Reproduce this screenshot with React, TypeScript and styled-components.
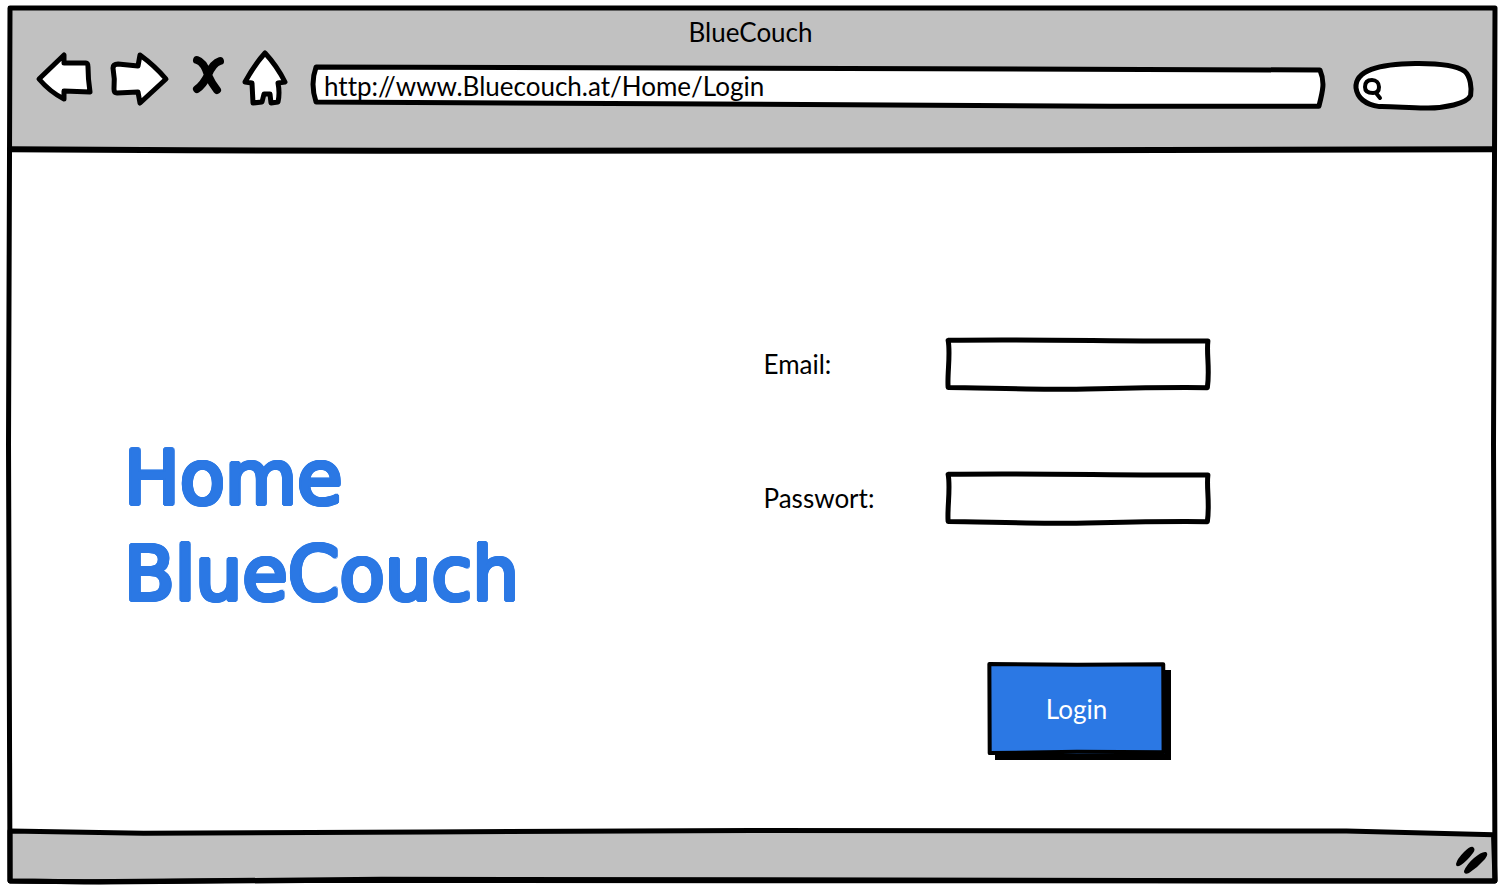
import React from "react";
import styled, { createGlobalStyle } from "styled-components";

const ink = "#000";
const chrome = "#c1c1c1";
const blue = "#2b78e4";
const sans = `Lato, "Open Sans", sans-serif`;

/* Soft marker edge: the glyphs are thickened by 2px in every direction. */
const markerEdge = [
  [2, 0], [-2, 0], [0, 2], [0, -2],
  [2, 1], [2, -1], [-2, 1], [-2, -1],
  [1, 2], [1, -2], [-1, 2], [-1, -2],
]
  .map(([x, y]) => `${x}px ${y}px 0 ${blue}`)
  .join(", ");

const GlobalStyle = createGlobalStyle`
  * { box-sizing: border-box; }
  body {
    margin: 0;
    background: #fff;
    color: ${ink};
    font: 26px/32px ${sans};
    font-variant-ligatures: none;
  }
  input, button { font: inherit; font-variant-ligatures: none; }
`;

const Page = styled.div`
  min-height: 100vh;
  padding: 8px 10px;
  display: flex;
`;

const Browser = styled.div`
  position: relative;
  flex: 1;
  display: flex;
  flex-direction: column;
`;

const Outline = styled.svg`
  position: absolute;
  inset: 0;
  width: 100%;
  height: 100%;
  overflow: visible;
  pointer-events: none;

  path {
    vector-effect: non-scaling-stroke;
    stroke: ${ink};
    stroke-linejoin: round;
    stroke-linecap: round;
  }
`;

type SketchProps = { d: string; fill?: string; width?: number };

/** Hand-drawn edge, stretched to the box that holds it. */
const Sketch = ({ d, fill = "none", width = 5 }: SketchProps) => (
  <Outline viewBox="0 0 1000 1000" preserveAspectRatio="none" aria-hidden="true">
    <path d={d} fill={fill} strokeWidth={width} />
  </Outline>
);

const Header = styled.header`
  position: relative;
  height: 142px;
  background: ${chrome};
`;

const Title = styled.div`
  padding: 8px 4px 0 0;
  text-align: center;
`;

const Toolbar = styled.div`
  display: flex;
  align-items: center;
  height: 62px;
  padding: 0 22px 0 26px;
`;

const Nav = styled.nav`
  display: flex;
  align-items: center;
  gap: 18px;
  height: 56px;
  margin-right: 26px;
`;

const IconButton = styled.button<{ $width: number }>`
  width: ${(p) => p.$width}px;
  height: 56px;
  padding: 0;
  border: 0;
  background: none;
  cursor: pointer;

  svg {
    display: block;
    overflow: visible;
  }
`;

const Field = styled.div`
  position: relative;
  display: flex;
`;

const AddressField = styled(Field)`
  flex: 1;
  height: 42px;
  margin: 14px 30px 0 0;
`;

const SearchField = styled(Field)`
  width: 120px;
  height: 48px;
  margin-top: 12px;
`;

const TextInput = styled.input<{ $inset?: number }>`
  position: relative;
  width: 100%;
  min-width: 0;
  padding: 0 12px 0 ${(p) => p.$inset ?? 12}px;
  border: 0;
  outline: 0;
  background: transparent;
  color: ${ink};
`;

const SearchIcon = styled.svg`
  position: absolute;
  left: 8px;
  top: 16px;
`;

const Main = styled.main`
  flex: 1;
  display: grid;
  grid-template-columns: 1fr 1fr;
  background: #fff;
`;

const Heading = styled.h1`
  margin: 0;
  padding: 280px 0 0 114px;
  color: ${blue};
  font-family: "DejaVu Sans", sans-serif;
  font-size: 74px;
  line-height: 96px;
  font-weight: 400;
  text-shadow: ${markerEdge};
`;

const Form = styled.form`
  padding: 188px 0 66px 11px;
`;

const FormRow = styled.div`
  display: grid;
  grid-template-columns: 182px 264px;
  align-items: center;
  height: 52px;
  margin-bottom: 82px;
`;

const FormField = styled(Field)`
  height: 52px;
`;

const LoginButton = styled.button`
  position: relative;
  display: block;
  width: 176px;
  height: 90px;
  margin: 140px 0 0 225px;
  padding: 0;
  border: 0;
  background: ${blue};
  box-shadow: 6px 6px 0 ${ink};
  color: #fff;
  cursor: pointer;
`;

const Footer = styled.footer`
  position: relative;
  height: 50px;
  display: flex;
  align-items: center;
  justify-content: flex-end;
  padding: 8px 6px 0 0;
`;

const Grip = styled.svg`
  position: relative;
`;

const Icon = ({ width, children }: { width: number; children: React.ReactNode }) => (
  <svg
    width={width}
    height={56}
    viewBox={`0 0 ${width} 56`}
    fill="#fff"
    stroke={ink}
    strokeWidth={5}
    strokeLinejoin="round"
    strokeLinecap="round"
    aria-hidden="true"
  >
    {children}
  </svg>
);

const boxEdge =
  "M8 45 C300 20 600 60 992 60 C986 300 1000 600 990 955 C700 940 500 1000 400 985 C250 980 100 950 8 950 C4 700 18 300 8 45Z";

export default function App() {
  return (
    <>
      <GlobalStyle />
      <Page>
        <Browser>
          <Header>
            <Title>BlueCouch</Title>
            <Toolbar>
              <Nav aria-label="Browser">
                <IconButton $width={56} type="button" aria-label="Back">
                  <Icon width={56}>
                    <path d="M3 28 L28 4 L28 12 L50 12 Q52 12 52 16 Q52 28 54 41 L28 40 L28 48 Q14 41 3 28Z" />
                  </Icon>
                </IconButton>
                <IconButton $width={64} type="button" aria-label="Forward">
                  <Icon width={64}>
                    <path d="M3 17 Q3 13 8 13 L28 15 L30 4 Q45 15 56 28 L30 52 L28 41 L7 42 Q4 42 4 38 Q5 28 3 17Z" />
                  </Icon>
                </IconButton>
                <IconButton $width={32} type="button" aria-label="Stop">
                  <Icon width={32}>
                    <path
                      d="M5 9 Q12 11 16 24 Q20 33 25 39 M28 10 Q21 12 16 24 Q11 34 5 38"
                      fill="none"
                      strokeWidth={8}
                    />
                  </Icon>
                </IconButton>
                <IconButton $width={44} type="button" aria-label="Home">
                  <Icon width={44}>
                    <path d="M23 2 Q35 15 43 31 L36 32 Q38 42 36 51 L29 52 L28 43 L22 43 L20 51 L11 52 L10 32 L3 31 Q13 13 23 2Z" />
                  </Icon>
                </IconButton>
              </Nav>
              <AddressField>
                <Sketch
                  fill="#fff"
                  width={5}
                  d="M4 50 C400 40 650 110 997 120 C1002 400 1000 600 996 980 C700 1000 500 930 4 880 Q-2 450 4 50Z"
                />
                <TextInput aria-label="Address" defaultValue="http://www.Bluecouch.at/Home/Login" />
              </AddressField>
              <SearchField>
                <Sketch
                  fill="#fff"
                  width={5}
                  d="M25 560 C15 210 210 55 520 50 C700 45 860 90 930 210 C980 320 990 560 980 720 C950 890 760 990 600 980 C450 975 330 945 220 950 C90 900 35 750 25 560Z"
                />
                <SearchIcon width={24} height={26} fill="none" stroke={ink} strokeWidth={4} strokeLinecap="round" aria-hidden="true">
                  <path d="M11 3 C6 3 4 6 4 10 C4 14 7 16 12 16 C16 16 18 14 18 10 C18 6 15 3 11 3Z M15 16 L19 21" />
                </SearchIcon>
                <TextInput aria-label="Search" $inset={32} />
              </SearchField>
            </Toolbar>
            <Sketch d="M0 994 L120 1002 L250 1006 L700 1002 L998 994" width={6} />
          </Header>
          <Main>
            <Heading>
              Home
              <br />
              BlueCouch
            </Heading>
            <Form onSubmit={(e) => e.preventDefault()}>
              <FormRow>
                <label htmlFor="email">Email:</label>
                <FormField>
                  <Sketch d={boxEdge} fill="#fff" />
                  <TextInput id="email" type="email" />
                </FormField>
              </FormRow>
              <FormRow>
                <label htmlFor="password">Passwort:</label>
                <FormField>
                  <Sketch d={boxEdge} fill="#fff" />
                  <TextInput id="password" type="password" />
                </FormField>
              </FormRow>
              <LoginButton type="submit">
                <Sketch d="M2 0 L500 8 L990 4 L992 980 L500 975 L4 990Z" width={4} />
                Login
              </LoginButton>
            </Form>
          </Main>
          <Footer>
            <Sketch
              fill={chrome}
              d="M0 0 L90 45 L280 20 L500 -10 L900 0 L999 75 L1000 1000 L200 990 L60 1020 L0 1000Z"
            />
            <Grip width={34} height={28} fill={ink} aria-hidden="true">
              <path d="M1 18 Q2 13 9 6 Q15 0 18 1 Q21 3 18 7 Q12 15 6 19 Q1 22 1 18Z M9 25 Q12 18 19 12 Q27 5 31 6 Q34 8 30 13 Q23 21 14 27 Q9 29 9 25Z" />
            </Grip>
          </Footer>
          <Sketch d="M0 0 L1000 0 L999 500 L1000 1000 L250 998 L50 1001 L0 1000 L-1 500Z" />
        </Browser>
      </Page>
    </>
  );
}
